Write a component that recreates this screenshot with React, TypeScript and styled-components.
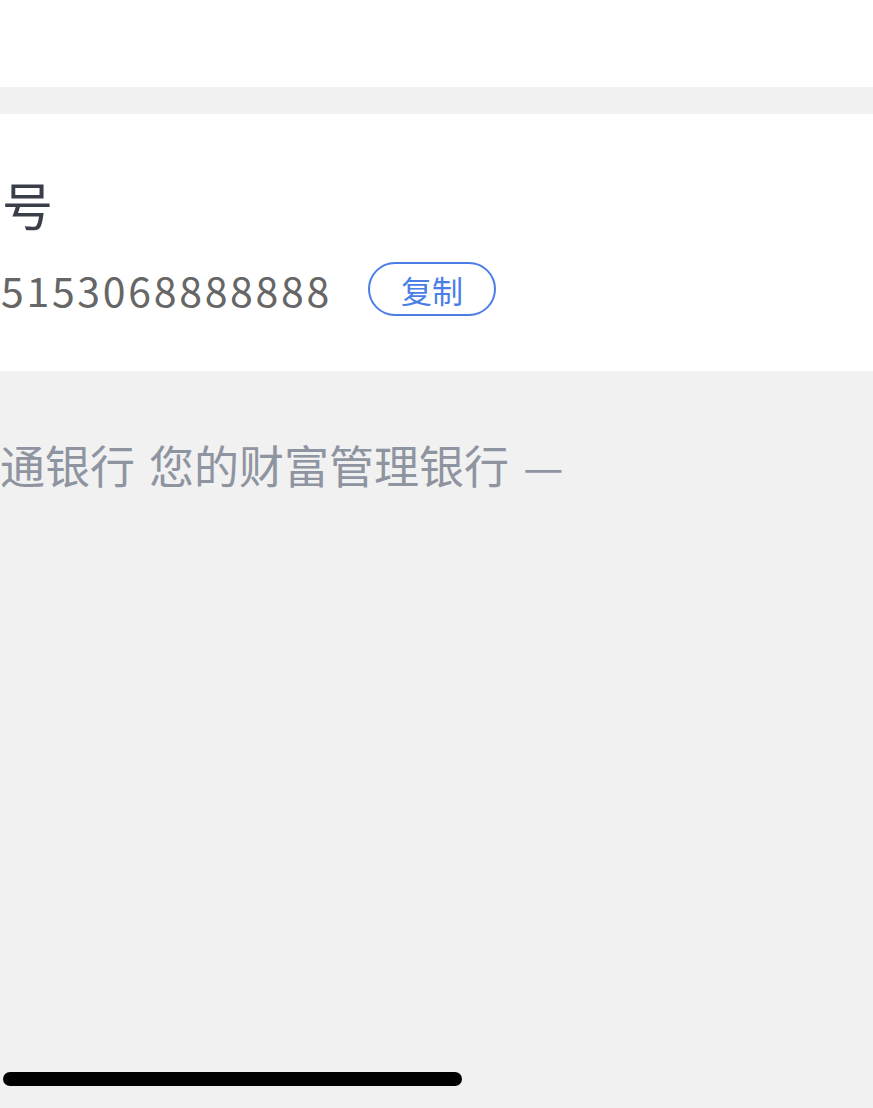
import styled, { createGlobalStyle } from 'styled-components';

const GlobalStyle = createGlobalStyle`
  html, body {
    margin: 0;
    padding: 0;
    background: #f1f1f1;
  }
  body {
    font-family: "Noto Sans CJK SC", "Noto Sans", sans-serif;
  }
`;

const Page = styled.div`
  width: 873px;
  height: 1108px;
  overflow: hidden;
  display: flex;
  flex-direction: column;
  background: #f1f1f1;
`;

const Header = styled.div`
  height: 87px;
  background: #ffffff;
  margin-bottom: 27px;
`;

const Card = styled.div`
  height: 257px;
  background: #ffffff;
  box-sizing: border-box;
  padding: 62px 0 0 0;
  display: flex;
  flex-direction: column;
`;

const Label = styled.div`
  font-size: 51px;
  line-height: 56px;
  color: #3a3e49;
  margin-left: 2px;
`;

const NumberRow = styled.div`
  display: flex;
  align-items: center;
  margin-top: 30px;
  gap: 36px;
`;

const AccountNo = styled.span`
  font-size: 41px;
  line-height: 54px;
  color: #666666;
  letter-spacing: 2.7px;
  margin-left: 1px;
`;

const CopyButton = styled.button`
  box-sizing: border-box;
  width: 128px;
  height: 54px;
  border: 2.5px solid #4a7ee6;
  border-radius: 27px;
  background: #ffffff;
  color: #4a7ee6;
  font-family: "Noto Sans CJK SC", sans-serif;
  font-size: 31px;
  line-height: 1;
  padding: 0;
  display: flex;
  align-items: center;
  justify-content: center;
`;

const Footer = styled.div`
  flex: 1;
  display: flex;
  flex-direction: column;
  padding-top: 66px;
`;

const Slogan = styled.div`
  font-size: 45px;
  line-height: 56px;
  color: #8e94a0;
  white-space: nowrap;
  word-spacing: 4px;
`;

const Spacer = styled.div`
  flex: 1;
`;

const HomeIndicator = styled.div`
  width: 459px;
  height: 14px;
  border-radius: 7px;
  background: #000000;
  margin: 0 0 22px 3px;
`;

export default function App() {
  return (
    <Page>
      <GlobalStyle />
      <Header />
      <Card>
        <Label>号</Label>
        <NumberRow>
          <AccountNo>5153068888888</AccountNo>
          <CopyButton>复制</CopyButton>
        </NumberRow>
      </Card>
      <Footer>
        <Slogan>通银行 您的财富管理银行 —</Slogan>
        <Spacer />
        <HomeIndicator />
      </Footer>
    </Page>
  );
}
